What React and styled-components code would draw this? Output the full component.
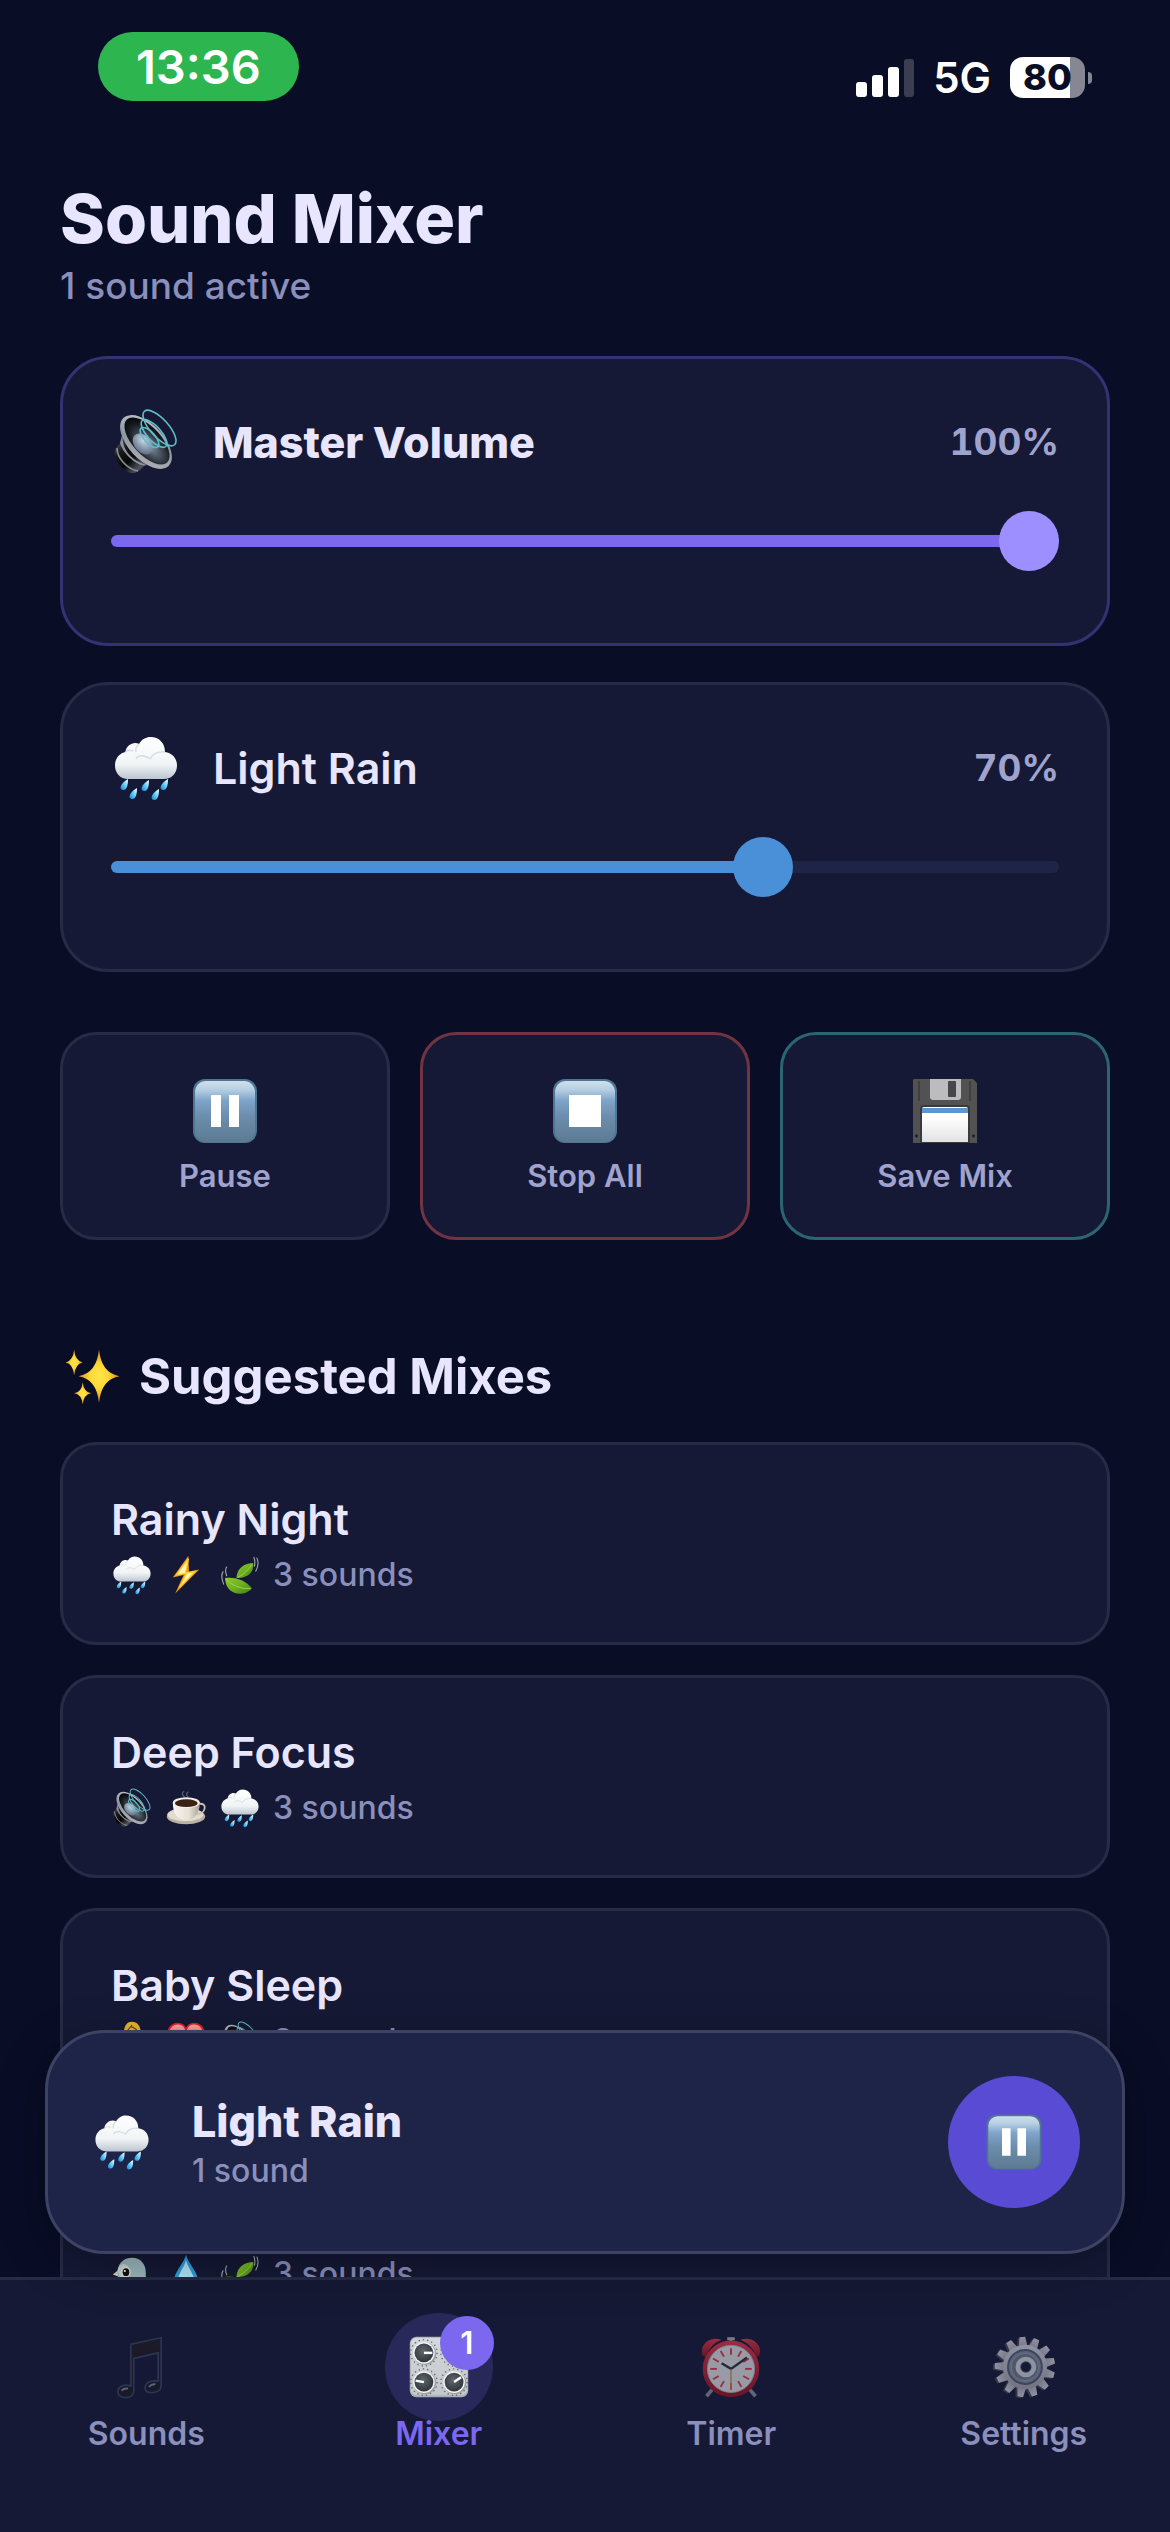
import { useState } from "react";
import styled, { createGlobalStyle, css } from "styled-components";

const GlobalStyle = createGlobalStyle`
  :root {
    --bg: #090d26;
    --surface: #151935;
    --surface-high: #1e2447;
    --line: #272b46;
    --line-high: #3e4363;
    --text: #e8e6ff;
    --text-soft: #9fa3ce;
    --text-muted: #8a8fbb;
    --primary: #7b68ee;
    --primary-light: #9d8fff;
    --primary-dark: #5a4bd4;
  }

  * {
    box-sizing: border-box;
  }

  body {
    margin: 0;
    background: var(--bg);
    color: var(--text);
    font-family: Inter, "Liberation Sans", sans-serif;
  }

  button, input {
    font-family: inherit;
  }
`;

/* shared fills for the emoji */
const Gradients = () => (
  <HiddenSvg aria-hidden="true">
    <defs>
      <linearGradient id="cloud" x1="0" y1="0" x2="0" y2="1">
        <stop offset="0" stopColor="#ffffff" />
        <stop offset="0.65" stopColor="#f1f4f6" />
        <stop offset="1" stopColor="#bcc6d0" />
      </linearGradient>
      <linearGradient id="drop" x1="1" y1="0" x2="0" y2="1">
        <stop offset="0" stopColor="#ffffff" />
        <stop offset="0.45" stopColor="#6fd3fb" />
        <stop offset="1" stopColor="#0a84d8" />
      </linearGradient>
      <linearGradient id="key" x1="0" y1="0" x2="0" y2="1">
        <stop offset="0" stopColor="#cfe0ec" />
        <stop offset="0.14" stopColor="#b6cfe2" />
        <stop offset="0.32" stopColor="#7ea4ca" />
        <stop offset="0.6" stopColor="#6b8cab" />
        <stop offset="1" stopColor="#5c7a92" />
      </linearGradient>
      <linearGradient id="metal" x1="0" y1="0" x2="1" y2="1">
        <stop offset="0" stopColor="#c6cdd8" />
        <stop offset="0.5" stopColor="#8f96a3" />
        <stop offset="1" stopColor="#b9b7b8" />
      </linearGradient>
      <radialGradient id="cone" cx="0.6" cy="0.55" r="0.6">
        <stop offset="0" stopColor="#8494a8" />
        <stop offset="0.35" stopColor="#4d5866" />
        <stop offset="0.8" stopColor="#15181c" />
        <stop offset="1" stopColor="#08090b" />
      </radialGradient>
      <radialGradient id="dome" cx="0.4" cy="0.35" r="0.7">
        <stop offset="0" stopColor="#c3d6e8" />
        <stop offset="1" stopColor="#5c6a7d" />
      </radialGradient>
      <linearGradient id="magnet" x1="0" y1="0" x2="1" y2="1">
        <stop offset="0" stopColor="#6b6e74" />
        <stop offset="0.3" stopColor="#17181b" />
        <stop offset="0.55" stopColor="#050506" />
        <stop offset="0.8" stopColor="#50545b" />
        <stop offset="1" stopColor="#222428" />
      </linearGradient>
      <radialGradient id="gold" cx="0.5" cy="0.5" r="0.5">
        <stop offset="0" stopColor="#ffe64a" />
        <stop offset="0.45" stopColor="#fdd835" />
        <stop offset="1" stopColor="#d98a20" />
      </radialGradient>
      <linearGradient id="leaf" x1="0" y1="0" x2="1" y2="1">
        <stop offset="0" stopColor="#8cc832" />
        <stop offset="0.5" stopColor="#6db021" />
        <stop offset="1" stopColor="#3f7d12" />
      </linearGradient>
      <linearGradient id="label" x1="0" y1="0" x2="0" y2="1">
        <stop offset="0.3" stopColor="#ffffff" />
        <stop offset="1" stopColor="#e2e2e4" />
      </linearGradient>
      <linearGradient id="cup" x1="0" y1="0" x2="1" y2="0">
        <stop offset="0" stopColor="#f8f5ef" />
        <stop offset="0.6" stopColor="#e6e0d6" />
        <stop offset="1" stopColor="#aaa297" />
      </linearGradient>
      <linearGradient id="panel" x1="0" y1="0" x2="0" y2="1">
        <stop offset="0" stopColor="#d5d8dc" />
        <stop offset="1" stopColor="#c3c7cb" />
      </linearGradient>
      <radialGradient id="knob" cx="0.45" cy="0.4" r="0.6">
        <stop offset="0" stopColor="#60676d" />
        <stop offset="1" stopColor="#30363b" />
      </radialGradient>
      <linearGradient id="bell" x1="0" y1="0" x2="0" y2="1">
        <stop offset="0" stopColor="#f23b4c" />
        <stop offset="1" stopColor="#a3121d" />
      </linearGradient>
      <linearGradient id="heart" x1="0" y1="0" x2="0" y2="1">
        <stop offset="0" stopColor="#ffb3b0" />
        <stop offset="0.5" stopColor="#f4474a" />
        <stop offset="1" stopColor="#c90f1c" />
      </linearGradient>
      <linearGradient id="gear" x1="0" y1="0" x2="0" y2="1">
        <stop offset="0" stopColor="#dfe3ec" />
        <stop offset="1" stopColor="#b3adb4" />
      </linearGradient>
    </defs>
  </HiddenSvg>
);

const RainDrop = ({ x, y }) => (
  <path
    d={`M${x + 4} ${y - 6} C${x + 4} ${y} ${x + 3} ${y + 5} ${x - 1} ${y + 5} C${x - 6} ${y + 4} ${x - 3} ${y - 2} ${x + 4} ${y - 6}Z`}
    fill="url(#drop)"
  />
);

const Sparkle = ({ x, y, w, h }) => (
  <path
    d={`M${x} ${y - h} Q${x + w * 0.12} ${y - h * 0.1} ${x + w} ${y} Q${x + w * 0.12} ${y + h * 0.1} ${x} ${y + h} Q${x - w * 0.12} ${y + h * 0.1} ${x - w} ${y} Q${x - w * 0.12} ${y - h * 0.1} ${x} ${y - h}Z`}
    fill="url(#gold)"
  />
);

const Knob = ({ x, y, angle }) => (
  <g>
    <circle cx={x} cy={y} r="14" fill="none" stroke="#62676c" strokeWidth="1.4" strokeDasharray="1.4 3.2" />
    <circle cx={x + 1} cy={y + 1} r="12" fill="#9a9fa4" />
    <circle cx={x} cy={y} r="11.5" fill="#f1f3f4" />
    <circle cx={x} cy={y} r="10" fill="url(#knob)" />
    <path d={`M${x} ${y}h9`} stroke="#fff" strokeWidth="2.6" transform={`rotate(${angle} ${x} ${y})`} />
  </g>
);

const range = (n) => Array.from({ length: n }, (_, i) => i);

const drawings = {
  rain: (
    <g>
      <path
        d="M14 43C6 43 1 37 1 29.500C1 22 6 17 11.500 16C12 9 20 5 25 8C28 3 32 1 36.500 1C45 1 51 7 51 16C58 17 63 22 63 29.500C63 37 58 43 50 43Z"
        fill="url(#cloud)"
      />
      <path
        d="M11.500 16Q14 13 19 15M25 8Q21 11 22 16M22 23Q24 19 30 20Q34 21 36 23M36 23Q40 15 51 16"
        fill="none"
        stroke="#d6dce2"
        strokeWidth="1.4"
      />
      <RainDrop x={10} y={49} />
      <RainDrop x={31} y={50} />
      <RainDrop x={50} y={49} />
      <RainDrop x={19} y={58} />
      <RainDrop x={41} y={59} />
    </g>
  ),
  speaker: (
    <g>
      <path d="M11 28L2 38C-3 46 8 62 18 63C23 63 27 60 33 53Z" fill="url(#magnet)" />
      <path d="M3 38C3 48 13 59 24 61" fill="none" stroke="#8b9097" strokeWidth="1.600" />
      <path d="M9 22C7 34 12 49 33 55C26 58 10 46 6 33Z" fill="#8d939c" />
      <ellipse cx="32" cy="32" rx="33" ry="17.500" transform="rotate(47 32 32)" fill="url(#metal)" />
      <ellipse cx="33" cy="31" rx="29.500" ry="14" transform="rotate(47 33 31)" fill="url(#cone)" />
      <ellipse cx="29" cy="34" rx="12" ry="8.500" transform="rotate(47 29 34)" fill="url(#dome)" />
      <g fill="none" stroke="#5fbccb" strokeWidth="1.600">
        <ellipse cx="45.500" cy="18" rx="22.500" ry="9" transform="rotate(48 45.500 18)" />
        <ellipse cx="40" cy="23.500" rx="17.500" ry="7" transform="rotate(48 40 23.500)" />
        <ellipse cx="35.500" cy="27.500" rx="12.500" ry="5.500" transform="rotate(48 35.500 27.500)" />
      </g>
    </g>
  ),
  pause: (
    <g>
      <rect width="64" height="64" rx="12" fill="#4f7592" />
      <rect x="2" y="2" width="60" height="61" rx="11" fill="url(#key)" />
      <path d="M18 16h10v32H18zM36 16h10v32H36z" fill="#fff" />
    </g>
  ),
  stop: (
    <g>
      <rect width="64" height="64" rx="12" fill="#4f7592" />
      <rect x="2" y="2" width="60" height="61" rx="11" fill="url(#key)" />
      <path d="M16 16h32v32H16z" fill="#fff" />
    </g>
  ),
  floppy: (
    <g>
      <path d="M1 0H60L64 4V64H0V1Z" fill="#525252" />
      <path d="M6 2V22M57 2V22" stroke="#3b3b3b" strokeWidth="1.600" />
      <path d="M17 0H48V18Q48 21 45 21H20Q17 21 17 18Z" fill="#bcbcbe" />
      <rect x="35" y="2" width="8" height="16" rx="1" fill="#474747" />
      <path d="M7 30Q7 26 11 26H53Q57 26 57 30V64H7Z" fill="#3a3a3a" />
      <path d="M9 30Q9 28 11 28H53Q55 28 55 30V63H9Z" fill="url(#label)" />
      <path d="M9 29H55V34H9Z" fill="#5a97d3" />
      <circle cx="3.500" cy="57" r="1.400" fill="#151935" />
      <circle cx="60.500" cy="57" r="1.400" fill="#151935" />
    </g>
  ),
  sparkles: (
    <g>
      <Sparkle x={39} y={31} w={24} h={31} />
      <Sparkle x={10} y={15} w={10} h={15} />
      <Sparkle x={20} y={51} w={10} h={13} />
    </g>
  ),
  bolt: (
    <g>
      <path d="M36 0L10 36L28 32L14 63L54 23L37 26Z" fill="#f0940f" />
      <path d="M36 5L16 32L33 29L21 53L47 26L31 29Z" fill="#fff6b0" stroke="#ffcf3a" strokeWidth="2" />
    </g>
  ),
  leaf: (
    <g>
      <path d="M26 37C27 20 40 12 54 12C56 26 46 38 26 37Z" fill="url(#leaf)" />
      <path d="M7 37C24 35 40 40 52 54C38 70 8 66 7 37Z" fill="url(#leaf)" />
      <path d="M28 36Q42 30 52 14M9 39Q22 55 50 55" fill="none" stroke="#a8d158" strokeWidth="1.500" />
      <path
        d="M55 2Q58 10 56 18M60 3Q65 14 58 26M4 26Q-1 34 5 48M10 18Q6 24 10 34"
        fill="none"
        stroke="#a3abb0"
        strokeWidth="1.800"
      />
    </g>
  ),
  coffee: (
    <g>
      <path d="M30 14Q22 8 29 4M36 14Q30 9 36 5" fill="none" stroke="#5d607b" strokeWidth="2" />
      <ellipse cx="32" cy="46" rx="32" ry="13" fill="#b9b1a4" />
      <ellipse cx="31" cy="43" rx="30" ry="11" fill="#e2dbcf" />
      <path d="M53 25Q65 24 63 33Q61 42 50 42" fill="none" stroke="#c9c1b4" strokeWidth="3" />
      <path d="M10 23C10 42 18 52 32 52C46 52 55 42 55 23Z" fill="url(#cup)" />
      <ellipse cx="32.500" cy="23" rx="22.500" ry="9" fill="#f3efe8" />
      <ellipse cx="32.500" cy="24" rx="19" ry="6.500" fill="#3a2115" />
    </g>
  ),
  baby: (
    <g>
      <circle cx="32" cy="38" r="25" fill="#fbc93c" />
      <path d="M18 17C20 5 24 0 32 0C41 0 45 6 47 17Z" fill="#e7b52f" />
      <path d="M24 15Q35 2 30 8Q38 10 41 16" fill="none" stroke="#6f4a0c" strokeWidth="2" />
    </g>
  ),
  heart: (
    <path
      d="M32 62C10 46 1 33 2 19C3 7 12 3 18 3C25 3 30 7 32 13C34 7 39 3 46 3C52 3 61 7 62 19C63 33 54 46 32 62Z"
      fill="url(#heart)"
      stroke="#e01f2b"
      strokeWidth="3"
    />
  ),
  bird: (
    <g>
      <path d="M10 25L0 33L14 38Z" fill="#d8d3c8" />
      <path d="M8 26C10 12 20 5 32 5C46 5 55 15 55 30V64H16C12 50 8 40 8 26Z" fill="#9db9bf" />
      <path d="M8 26C10 15 20 12 26 20C30 34 20 40 12 38Z" fill="#c6d6d6" />
      <ellipse cx="22" cy="29" rx="8" ry="9" fill="#e9e4da" />
      <ellipse cx="22" cy="29" rx="5.500" ry="6.500" fill="#14110f" />
      <circle cx="20" cy="27" r="1.800" fill="#fff" />
    </g>
  ),
  droplet: (
    <g>
      <path d="M32 0C36 16 52 28 52 44C52 56 43 64 32 64C21 64 12 56 12 44C12 28 28 16 32 0Z" fill="#2f9fe0" />
      <path d="M32 9C35 22 46 32 46 45C46 54 40 60 32 60C24 60 18 54 18 45C18 32 29 22 32 9Z" fill="#b5e8fb" />
    </g>
  ),
  note: (
    <g>
      <path
        d="M16 8L48 1V53C47 60 31 62 31 54C31 48 38 46 45 47V17L19 23V58C18 67 1 66 2 58C3 52 9 50 16 52Z"
        fill="#1b1a22"
        stroke="#3d4a63"
        strokeWidth="1.800"
      />
      <path d="M17 9L47 2V14L17 20Z" fill="#221b20" />
      <path d="M6 57Q9 54 13 55M35 53Q38 50 42 50" fill="none" stroke="#8c94a8" strokeWidth="2" />
    </g>
  ),
  knobs: (
    <g>
      <rect x="1" y="0" width="62" height="64" rx="7" fill="#a9aeb3" />
      <rect x="2" y="1" width="60" height="61" rx="6" fill="url(#panel)" />
      <Knob x={16} y={17} angle={0} />
      <Knob x={48} y={17} angle={-45} />
      <Knob x={16} y={48} angle={190} />
      <Knob x={48} y={48} angle={-35} />
    </g>
  ),
  clock: (
    <g>
      <path d="M12 56L6 63M52 56L58 63" stroke="#8e98a5" strokeWidth="4" />
      <path d="M28 2H36M32 2V8" stroke="#b8bec8" strokeWidth="3" />
      <path d="M2 20C-2 10 8 -1 22 3Q10 8 5 21ZM62 20C66 10 56 -1 42 3Q54 8 59 21Z" fill="url(#bell)" />
      <circle cx="32" cy="34" r="30" fill="url(#bell)" />
      <circle cx="32" cy="34" r="25" fill="#f0f0f2" stroke="#bfc2c9" />
      {range(12).map((i) => (
        <path key={i} d="M32 12V19" stroke="#ef3b4b" strokeWidth="2" transform={`rotate(${i * 30} 32 34)`} />
      ))}
      <path d="M22 28L32 34L49 22" fill="none" stroke="#30333b" strokeWidth="2.600" />
      <path d="M32 34V55" stroke="#d39a55" strokeWidth="1.400" />
    </g>
  ),
  gear: (
    <g>
      <g fill="#4b4a55">
        {range(13).map((i) => (
          <path key={i} d="M26 12L28 1H34L36 12Z" transform={`rotate(${i * 27.7 - 5} 31 33)`} />
        ))}
      </g>
      <g fill="url(#gear)">
        {range(13).map((i) => (
          <path key={i} d="M28 12L30 0H36L38 12Z" transform={`rotate(${i * 27.7 - 5} 33 32)`} />
        ))}
        <circle cx="33" cy="32" r="23.500" />
      </g>
      <circle cx="33" cy="32" r="18" fill="#8b95a6" stroke="#596375" strokeWidth="2" />
      <circle cx="33" cy="32" r="14.500" fill="#77818f" stroke="#a2acbb" />
      <circle cx="34" cy="32" r="8.500" fill="#4d5666" stroke="#dfe3ec" strokeWidth="5" />
      <circle cx="34" cy="32" r="5" fill="#151935" />
    </g>
  ),
};

const Emoji = ({ name, size }) => (
  <EmojiSvg viewBox="-3 -3 70 70" $size={size} aria-hidden="true">
    {drawings[name]}
  </EmojiSvg>
);

const VolumeCard = ({ id, icon, name, color, thumb, primary, initial }) => {
  const [value, setValue] = useState(initial);

  return (
    <Card $primary={primary}>
      <CardHeader>
        <Emoji name={icon} size={70} />
        <CardLabel htmlFor={id} $primary={primary}>
          {name}
        </CardLabel>
        <Percent htmlFor={id}>{value}%</Percent>
      </CardHeader>
      <Slider
        id={id}
        type="range"
        min="0"
        max="100"
        value={value}
        onChange={(e) => setValue(Number(e.target.value))}
        $color={color}
        $thumb={thumb}
        style={{ "--fill": `${value}%` }}
      />
    </Card>
  );
};

const actions = [
  { id: "pause", icon: "pause", text: "Pause", line: "#272b46" },
  { id: "stop", icon: "stop", text: "Stop All", line: "#713443" },
  { id: "save", icon: "floppy", text: "Save Mix", line: "#2b6670" },
];

const mixes = [
  { name: "Rainy Night", icons: ["rain", "bolt", "leaf"] },
  { name: "Deep Focus", icons: ["speaker", "coffee", "rain"] },
  { name: "Baby Sleep", icons: ["baby", "heart", "speaker"] },
  { name: "Forest Morning", icons: ["bird", "droplet", "leaf"] },
];

const tabs = [
  { icon: "note", text: "Sounds" },
  { icon: "knobs", text: "Mixer", active: true, badge: 1 },
  { icon: "clock", text: "Timer" },
  { icon: "gear", text: "Settings" },
];

const App = () => {
  return (
    <Screen>
      <GlobalStyle />
      <Gradients />

      <StatusBar>
        <Time>13:36</Time>
        <StatusIcons>
          <Signal viewBox="0 0 58 38" aria-hidden="true">
            <rect x="0" y="23" width="11" height="15" rx="3" fill="#fff" />
            <rect x="16" y="16" width="11" height="22" rx="3" fill="#fff" />
            <rect x="32" y="8" width="11" height="30" rx="3" fill="#fff" />
            <rect x="48" y="0" width="10" height="38" rx="3" fill="#3b3e51" />
          </Signal>
          <Network>5G</Network>
          <Battery>
            <Charge>80</Charge>
            <BatteryTip />
          </Battery>
        </StatusIcons>
      </StatusBar>

      <Content>
        <Title>Sound Mixer</Title>
        <Subtitle>1 sound active</Subtitle>

        <Cards>
          <VolumeCard
            id="master"
            icon="speaker"
            name="Master Volume"
            color="var(--primary)"
            thumb="var(--primary-light)"
            initial={100}
            primary
          />
          <VolumeCard id="rain" icon="rain" name="Light Rain" color="#4a90d9" thumb="#4a90d9" initial={70} />
        </Cards>

        <Actions>
          {actions.map((action) => (
            <ActionButton key={action.id} type="button" $line={action.line}>
              <Emoji name={action.icon} size={70} />
              <span>{action.text}</span>
            </ActionButton>
          ))}
        </Actions>

        <SectionTitle>
          <Emoji name="sparkles" size={60} />
          <span>Suggested Mixes</span>
        </SectionTitle>

        <Mixes>
          {mixes.map((mix) => (
            <MixCard key={mix.name} type="button">
              <MixName>{mix.name}</MixName>
              <MixInfo>
                {mix.icons.map((icon) => (
                  <Emoji key={icon} name={icon} size={42} />
                ))}
                <span>{mix.icons.length} sounds</span>
              </MixInfo>
            </MixCard>
          ))}
        </Mixes>
      </Content>

      <Footer>
        <MiniPlayer>
          <Emoji name="rain" size={60} />
          <NowPlaying>
            <NowTitle>Light Rain</NowTitle>
            <NowInfo>1 sound</NowInfo>
          </NowPlaying>
          <PlayButton type="button" aria-label="Pause">
            <Emoji name="pause" size={60} />
          </PlayButton>
        </MiniPlayer>

        <TabBar>
          {tabs.map((tab) => (
            <Tab key={tab.text} href="#" $active={tab.active}>
              <TabIcon $active={tab.active}>
                <Emoji name={tab.icon} size={66} />
                {tab.badge && <Badge>{tab.badge}</Badge>}
              </TabIcon>
              <TabText>{tab.text}</TabText>
            </Tab>
          ))}
        </TabBar>
      </Footer>
    </Screen>
  );
};

const HiddenSvg = styled.svg`
  position: absolute;
  width: 0;
  height: 0;
`;

const EmojiSvg = styled.svg`
  display: block;
  flex: none;
  width: ${(p) => p.$size}px;
  height: ${(p) => p.$size}px;
`;

const Screen = styled.div`
  display: flex;
  flex-direction: column;
  height: 100vh;
  overflow: hidden;
`;

const StatusBar = styled.header`
  display: flex;
  justify-content: space-between;
  align-items: flex-end;
  flex: none;
  padding: 32px 78px 0 98px;
  color: #fff;
`;

const Time = styled.div`
  padding: 0 38px;
  border-radius: 35px;
  background: #2db550;
  font-size: 47px;
  line-height: 69px;
  font-weight: 600;
`;

const StatusIcons = styled.div`
  display: flex;
  align-items: center;
  padding-bottom: 3px;
`;

const Signal = styled.svg`
  width: 58px;
  height: 38px;
`;

const Network = styled.span`
  margin: 0 19px;
  font-size: 42px;
  line-height: 41px;
  font-weight: 600;
`;

const Battery = styled.div`
  display: flex;
  align-items: center;
  gap: 3px;
`;

const Charge = styled.span`
  width: 75px;
  border-radius: 13px;
  background: linear-gradient(to right, #fff 80%, #868793 80%);
  color: var(--bg);
  font-size: 36px;
  line-height: 41px;
  font-weight: 800;
  text-align: center;
`;

const BatteryTip = styled.i`
  width: 4px;
  height: 12px;
  border-radius: 0 4px 4px 0;
  background: #868793;
`;

const Content = styled.main`
  flex: 1;
  min-height: 0;
  overflow: hidden;
  padding: 77px 60px 0;
`;

const Title = styled.h1`
  margin: 0;
  font-size: 68px;
  line-height: 80px;
  font-weight: 800;
`;

const Subtitle = styled.p`
  margin: 6px 0 0;
  color: var(--text-muted);
  font-size: 37px;
  line-height: 44px;
  font-weight: 500;
`;

const Cards = styled.div`
  display: grid;
  gap: 36px;
  margin-top: 48px;
`;

const Card = styled.section`
  padding: 48px 48px 72px;
  border: 3px solid ${(p) => (p.$primary ? "#353274" : "var(--line)")};
  border-radius: 48px;
  background: var(--surface);
`;

const CardHeader = styled.div`
  display: flex;
  align-items: center;
`;

const CardLabel = styled.label`
  flex: 1;
  margin-left: 32px;
  font-size: 43px;
  line-height: 50px;
  font-weight: ${(p) => (p.$primary ? 800 : 600)};
`;

const Percent = styled.output`
  color: var(--text-soft);
  font-size: 37px;
  line-height: 44px;
  font-weight: 700;
  font-variant-numeric: tabular-nums;
`;

const trackStyle = css`
  height: 12px;
  border-radius: 6px;
  background: linear-gradient(to right, ${(p) => p.$color} var(--fill), var(--surface-high) var(--fill));
`;

const Slider = styled.input`
  display: block;
  width: 100%;
  height: 60px;
  margin: 34px 0 0;
  appearance: none;
  background: transparent;

  &::-webkit-slider-runnable-track {
    ${trackStyle}
  }

  &::-webkit-slider-thumb {
    appearance: none;
    width: 60px;
    height: 60px;
    margin-top: -24px;
    border-radius: 50%;
    background: ${(p) => p.$thumb};
  }
`;

const Actions = styled.div`
  display: grid;
  grid-template-columns: repeat(3, 1fr);
  gap: 30px;
  margin-top: 60px;
`;

const ActionButton = styled.button`
  display: flex;
  flex-direction: column;
  align-items: center;
  gap: 12px;
  padding: 41px 0 43px;
  border: 3px solid ${(p) => p.$line};
  border-radius: 36px;
  background: var(--surface);
  color: var(--text-soft);
  font-size: 31px;
  line-height: 36px;
  font-weight: 600;
`;

const SectionTitle = styled.h2`
  display: flex;
  align-items: center;
  gap: 16px;
  margin: 107px 0 35px;
  padding-left: 3px;
  font-size: 49px;
  line-height: 60px;
  font-weight: 700;
`;

const Mixes = styled.div`
  display: grid;
  gap: 30px;
`;

const MixCard = styled.button`
  display: flex;
  flex-direction: column;
  gap: 10px;
  padding: 49px 48px 46px;
  border: 3px solid var(--line);
  border-radius: 36px;
  background: var(--surface);
  color: var(--text);
  text-align: left;
`;

const MixName = styled.span`
  font-size: 43px;
  line-height: 50px;
  font-weight: 600;
`;

const MixInfo = styled.span`
  display: flex;
  align-items: center;
  gap: 12px;
  color: var(--text-muted);
  font-size: 32px;
  line-height: 36px;
  font-weight: 500;
`;

const Footer = styled.footer`
  position: relative;
  flex: none;
`;

const MiniPlayer = styled.section`
  position: absolute;
  left: 45px;
  right: 45px;
  bottom: 100%;
  display: flex;
  align-items: center;
  margin-bottom: 23px;
  padding: 43px 42px 43px 44px;
  border: 3px solid var(--line-high);
  border-radius: 60px;
  background: var(--surface-high);
  box-shadow: 0 12px 48px rgba(0, 0, 0, 0.3);
`;

const NowPlaying = styled.div`
  flex: 1;
  margin-left: 40px;
`;

const NowTitle = styled.div`
  font-size: 43px;
  line-height: 50px;
  font-weight: 800;
`;

const NowInfo = styled.div`
  margin-top: 7px;
  color: var(--text-muted);
  font-size: 32px;
  line-height: 36px;
  font-weight: 500;
`;

const PlayButton = styled.button`
  display: grid;
  place-items: center;
  width: 132px;
  height: 132px;
  padding: 0;
  border: 0;
  border-radius: 50%;
  background: var(--primary-dark);
`;

const TabBar = styled.nav`
  display: grid;
  grid-template-columns: repeat(4, 1fr);
  padding: 33px 0 79px;
  border-top: 3px solid var(--line);
  background: var(--surface);
`;

const Tab = styled.a`
  display: flex;
  flex-direction: column;
  align-items: center;
  color: ${(p) => (p.$active ? "var(--primary)" : "var(--text-muted)")};
  text-decoration: none;

  svg {
    opacity: ${(p) => (p.$active ? 1 : 0.6)};
  }
`;

const TabIcon = styled.span`
  position: relative;
  display: grid;
  place-items: center;
  width: 108px;
  height: 108px;
  border-radius: 50%;
  background: ${(p) => (p.$active ? "#29285a" : "transparent")};
`;

const Badge = styled.b`
  position: absolute;
  top: 3px;
  right: -1px;
  width: 54px;
  border-radius: 50%;
  background: var(--primary);
  color: #fff;
  font-size: 31px;
  line-height: 54px;
  font-weight: 600;
  text-align: center;
`;

const TabText = styled.span`
  margin-top: -6px;
  font-size: 32px;
  line-height: 38px;
  font-weight: 600;
`;

export default App;
